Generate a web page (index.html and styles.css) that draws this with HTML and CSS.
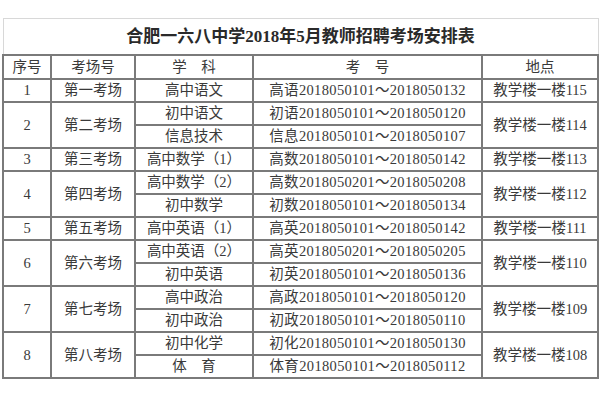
FILE: index.html
```html
<!DOCTYPE html>
<html lang="zh">
<head>
<meta charset="utf-8">
<link rel="stylesheet" href="styles.css">
</head>
<body>
<table class="sched">
  <colgroup>
    <col class="c1"><col class="c2"><col class="c3"><col class="c4"><col class="c5">
  </colgroup>
  <tr class="title-row"><td colspan="5" class="title">合肥一六八中学2018年5月教师招聘考场安排表</td></tr>
  <tr class="head"><td>序号</td><td>考场号</td><td>学　科</td><td>考　号</td><td>地点</td></tr>
  <tr><td>1</td><td>第一考场</td><td>高中语文</td><td class="code">高语2018050101～2018050132</td><td>教学楼一楼115</td></tr>
  <tr><td rowspan="2">2</td><td rowspan="2">第二考场</td><td>初中语文</td><td class="code">初语2018050101～2018050120</td><td rowspan="2">教学楼一楼114</td></tr>
  <tr><td>信息技术</td><td class="code">信息2018050101～2018050107</td></tr>
  <tr><td>3</td><td>第三考场</td><td>高中数学（1）</td><td class="code">高数2018050101～2018050142</td><td>教学楼一楼113</td></tr>
  <tr><td rowspan="2">4</td><td rowspan="2">第四考场</td><td>高中数学（2）</td><td class="code">高数2018050201～2018050208</td><td rowspan="2">教学楼一楼112</td></tr>
  <tr><td>初中数学</td><td class="code">初数2018050101～2018050134</td></tr>
  <tr><td>5</td><td>第五考场</td><td>高中英语（1）</td><td class="code">高英2018050101～2018050142</td><td>教学楼一楼111</td></tr>
  <tr><td rowspan="2">6</td><td rowspan="2">第六考场</td><td>高中英语（2）</td><td class="code">高英2018050201～2018050205</td><td rowspan="2">教学楼一楼110</td></tr>
  <tr><td>初中英语</td><td class="code">初英2018050101～2018050136</td></tr>
  <tr><td rowspan="2">7</td><td rowspan="2">第七考场</td><td>高中政治</td><td class="code">高政2018050101～2018050120</td><td rowspan="2">教学楼一楼109</td></tr>
  <tr><td>初中政治</td><td class="code">初政2018050101～2018050110</td></tr>
  <tr><td rowspan="2">8</td><td rowspan="2">第八考场</td><td>初中化学</td><td class="code">初化2018050101～2018050130</td><td rowspan="2">教学楼一楼108</td></tr>
  <tr><td>体　育</td><td class="code">体育2018050101～2018050112</td></tr>
</table>
</body>
</html>
```
FILE: styles.css
```css
html, body {
  margin: 0;
  padding: 0;
  background: #ffffff;
}
body {
  padding: 18px 0 0 2px;
  font-family: "Liberation Serif", "Noto Sans CJK SC", serif;
  color: #3a3a3a;
}
.sched {
  border-collapse: collapse;
  table-layout: fixed;
  width: 595px;
}
.c1 { width: 48px; }
.c2 { width: 84px; }
.c3 { width: 118px; }
.c4 { width: 229px; }
.c5 { width: 116px; }
.sched td {
  border: 2px solid #7a7a7a;
  padding: 0;
  height: 21px;
  line-height: 1;
  text-align: center;
  vertical-align: middle;
  font-size: 14.5px;
  white-space: nowrap;
  overflow: hidden;
}
.sched td.code {
  letter-spacing: 0.35px;
}
.sched .title-row td {
  height: 35px;
  border: 1px solid #d8d8d8;
  border-bottom: 2px solid #7a7a7a;
  font-size: 17px;
  font-weight: bold;
  color: #2a2a2a;
}
.sched .head td {
  height: 22px;
}
```
